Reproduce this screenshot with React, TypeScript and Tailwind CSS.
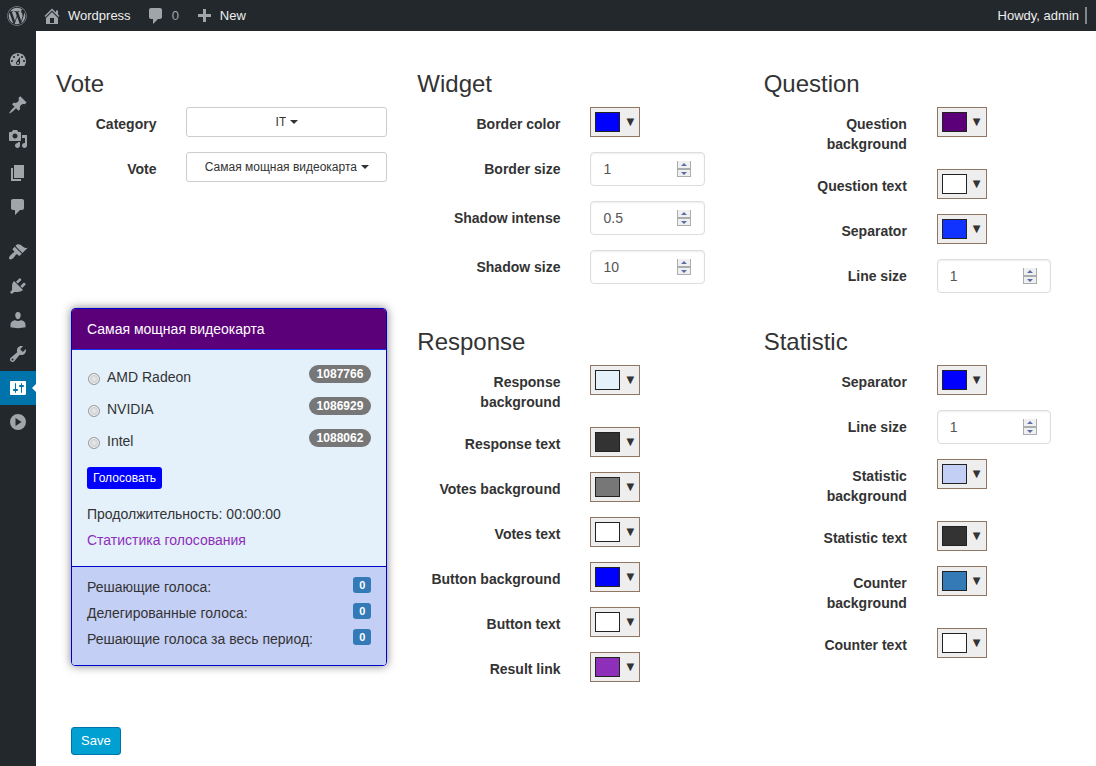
import clsx from 'clsx'
import React from 'react'
import { FaWordpress } from 'react-icons/fa'

const icons = {
  home: 'M16 8.5l1.53 1.53-1.06 1.06L10 4.6l-6.47 6.49-1.06-1.06L10 2.5l4 4v-2h2v4zm-6-2.46l6 5.99V18H4v-5.97zM12 17v-5H8v5h4z',
  comments:
    'M5 2h9c1.1 0 2 .9 2 2v7c0 1.1-.9 2-2 2h-2l-5 5v-5H5c-1.1 0-2-.9-2-2V4c0-1.1.9-2 2-2z',
  plus: 'M17 8v3h-5v5H9v-5H4V8h5V3h3v5h5z',
  dashboard:
    'M3.76 16h12.48c1.1-1.37 1.76-3.11 1.76-5 0-4.42-3.58-8-8-8s-8 3.58-8 8c0 1.89.66 3.63 1.76 5zM10 4c.55 0 1 .45 1 1s-.45 1-1 1-1-.45-1-1 .45-1 1-1zM6 6c.55 0 1 .45 1 1s-.45 1-1 1-1-.45-1-1 .45-1 1-1zm8 0c.55 0 1 .45 1 1s-.45 1-1 1-1-.45-1-1 .45-1 1-1zm-5.37 5.55L12 7v6c0 1.1-.9 2-2 2s-2-.9-2-2c0-.57.24-1.08.63-1.45zM4 10c.55 0 1 .45 1 1s-.45 1-1 1-1-.45-1-1 .45-1 1-1zm12 0c.55 0 1 .45 1 1s-.45 1-1 1-1-.45-1-1 .45-1 1-1zm-5 3c0-.55-.45-1-1-1s-1 .45-1 1 .45 1 1 1 1-.45 1-1z',
  posts:
    'M10.44 3.02l1.82-1.82 6.36 6.35-1.83 1.82c-1.05-.68-2.48-.57-3.41.36l-.75.75c-.92.93-1.04 2.35-.35 3.41l-1.83 1.82-2.41-2.41-2.8 2.79c-.42.42-3.38 2.71-3.8 2.29s1.86-3.39 2.28-3.81l2.79-2.79L4.1 9.36l1.83-1.82c1.05.69 2.48.57 3.4-.36l.75-.75c.93-.92 1.05-2.35.36-3.41z',
  media:
    'M13 11V4c0-.55-.45-1-1-1h-1.67L9 1H5L3.67 3H2c-.55 0-1 .45-1 1v7c0 .55.45 1 1 1h10c.55 0 1-.45 1-1zM7 4.5c1.38 0 2.5 1.12 2.5 2.5S8.38 9.5 7 9.5 4.5 8.38 4.5 7 5.62 4.5 7 4.5zM14 6h5v10.5c0 1.38-1.12 2.5-2.5 2.5S14 17.88 14 16.5s1.12-2.5 2.5-2.5c.17 0 .34.02.5.05V9h-3V6zm-4 8.05V13h2v3.5c0 1.38-1.12 2.5-2.5 2.5S7 17.88 7 16.5 8.12 14 9.5 14c.17 0 .34.02.5.05z',
  pages: 'M6 15V2h10v13H6zm-1 1h8v2H3V5h2v11z',
  appearance:
    'M14.48 11.06L7.41 3.99l1.5-1.5c.5-.56 2.3-.47 3.51.32 1.21.8 1.43 1.28 2.91 2.1 1.18.64 2.45 1.26 4.45.85zm-.71.71L6.7 4.7 4.93 6.47c-.39.39-.39 1.02 0 1.41l1.06 1.06c.39.39.39 1.03 0 1.42-.6.6-1.43 1.11-2.21 1.69-.35.26-.7.53-1.01.84C1.43 14.23.4 16.08 1.4 17.07c.99 1 2.84-.03 4.18-1.36.31-.31.58-.66.85-1.02.57-.78 1.08-1.61 1.69-2.21.39-.39 1.02-.39 1.41 0l1.06 1.06c.39.39 1.02.39 1.41 0z',
  plugins:
    'M13.11 4.36L9.87 7.6 8 5.73l3.24-3.24c.35-.34 1.05-.2 1.56.32.52.51.66 1.21.31 1.55zm-8 1.77l.91-1.12 9.01 9.01-1.19.84c-.71.71-2.63 1.16-3.82 1.16H6.14L4.9 17.26c-.59.59-1.54.59-2.12 0-.59-.58-.59-1.53 0-2.12l1.24-1.24v-3.88c0-1.13.4-3.19 1.09-3.89zm7.26 3.97l3.24-3.24c.34-.35 1.04-.21 1.55.31.52.51.66 1.21.31 1.55l-3.24 3.25z',
  users:
    'M10 9.25c-2.27 0-2.73-3.44-2.73-3.44C7 4.02 7.82 2 9.97 2c2.16 0 2.98 2.02 2.71 3.81 0 0-.41 3.44-2.68 3.44zM7.2 10.2c1.6 1.1 4 1.1 5.6 0 2.5.1 4.7 2 4.7 4.5v2.6c-3.8 1.1-11.2 1.1-15 0v-2.6c0-2.5 2.2-4.4 4.7-4.5z',
  tools:
    'M16.68 9.77c-1.34 1.34-3.3 1.67-4.95.99l-5.41 6.52c-.99.99-2.59.99-3.58 0s-.99-2.59 0-3.57l6.52-5.42c-.68-1.65-.35-3.61.99-4.95 1.28-1.28 3.12-1.62 4.72-1.06l-2.89 2.89 2.82 2.82 2.86-2.87c.53 1.58.18 3.39-1.08 4.65zM3.81 16.21c.4.39 1.04.39 1.43 0 .4-.4.4-1.04 0-1.43-.39-.4-1.03-.4-1.43 0-.39.39-.39 1.03 0 1.43z',
  settings:
    'M18 16V4c0-.55-.45-1-1-1H3c-.55 0-1 .45-1 1v12c0 .55.45 1 1 1h13c.55 0 2-.45 2-1zM8 11h1c.55 0 1 .45 1 1s-.45 1-1 1H8v1.5c0 .28-.22.5-.5.5s-.5-.22-.5-.5V13H6c-.55 0-1-.45-1-1s.45-1 1-1h1V5.5c0-.28.22-.5.5-.5s.5.22.5.5V11zm5-2h-1c-.55 0-1-.45-1-1s.45-1 1-1h1V5.5c0-.28.22-.5.5-.5s.5.22.5.5V7h1c.55 0 1 .45 1 1s-.45 1-1 1h-1v5.5c0 .28-.22.5-.5.5s-.5-.22-.5-.5V9z',
  collapse: 'M10 2a8 8 0 1 1 0 16a8 8 0 1 1 0-16zM7.5 6v8l6-4z',
}

type IconName = keyof typeof icons

const menu: IconName[][] = [
  ['dashboard'],
  ['posts', 'media', 'pages', 'comments'],
  ['appearance', 'plugins', 'users', 'tools', 'settings', 'collapse'],
]

interface Field {
  label: string
  color?: string
  value?: string
}

const widget: Field[] = [
  { label: 'Border color', color: '#0000ff' },
  { label: 'Border size', value: '1' },
  { label: 'Shadow intense', value: '0.5' },
  { label: 'Shadow size', value: '10' },
]

const question: Field[] = [
  { label: 'Question background', color: '#5b0078' },
  { label: 'Question text', color: '#ffffff' },
  { label: 'Separator', color: '#1133ff' },
  { label: 'Line size', value: '1' },
]

const response: Field[] = [
  { label: 'Response background', color: '#e4f1fb' },
  { label: 'Response text', color: '#333333' },
  { label: 'Votes background', color: '#777777' },
  { label: 'Votes text', color: '#ffffff' },
  { label: 'Button background', color: '#0000ff' },
  { label: 'Button text', color: '#ffffff' },
  { label: 'Result link', color: '#8d2fb8' },
]

const statistic: Field[] = [
  { label: 'Separator', color: '#0000ff' },
  { label: 'Line size', value: '1' },
  { label: 'Statistic background', color: '#c4cff5' },
  { label: 'Statistic text', color: '#333333' },
  { label: 'Counter background', color: '#337ab7' },
  { label: 'Counter text', color: '#ffffff' },
]

const answers = [
  { name: 'AMD Radeon', votes: '1087766' },
  { name: 'NVIDIA', votes: '1086929' },
  { name: 'Intel', votes: '1088062' },
]

const totals = [
  'Решающие голоса:',
  'Делегированные голоса:',
  'Решающие голоса за весь период:',
]

const Icon = ({ name }: { name: IconName }) => (
  <svg
    viewBox="0 0 20 20"
    className="size-5 shrink-0 fill-current"
    aria-hidden="true"
  >
    <path fillRule="evenodd" d={icons[name]} />
  </svg>
)

const ColorPicker = ({ id, color }: { id: string; color: string }) => (
  <button
    id={id}
    type="button"
    className="flex h-[30px] w-[50px] items-center gap-1.5 border border-[#917661] bg-[#eeeeee] pl-1"
  >
    <span
      className="h-5 w-[25px] border border-[#222222]"
      style={{ backgroundColor: color }}
    />
    <span className="font-['DejaVu_Sans',sans-serif] text-[10px] leading-4 text-[#333333]">
      ▼
    </span>
  </button>
)

const NumberInput = ({ id, value }: { id: string; value: string }) => (
  <div className="relative">
    <input
      id={id}
      type="number"
      step="any"
      defaultValue={value}
      className="block h-[34px] w-full [appearance:textfield] rounded border border-[#dddddd] bg-white pr-8 pl-3 text-sm text-[#555555] shadow-[inset_0_1px_2px_rgba(0,0,0,0.07)] [&::-webkit-inner-spin-button]:appearance-none"
    />
    <svg
      viewBox="0 0 14 16"
      className="pointer-events-none absolute top-[9px] right-3.5 h-4 w-3.5"
      aria-hidden="true"
    >
      <path fill="#f0f0f0" d="M0 0h14v16H0z" />
      <path fill="#a9adb0" d="M0 0h1v16H0zM13 0h1v16h-1zM0 7h14v2H0zM0 15h14v1H0z" />
      <path fill="#5a6fa8" d="M7 2l3 3H4zM7 14l-3-3h6z" />
    </svg>
  </div>
)

const Select = ({ id, value }: { id: string; value: string }) => (
  <div className="flex h-[30px] items-center justify-center gap-1 rounded-[3px] border border-[#cccccc]">
    <select
      id={id}
      className="[field-sizing:content] appearance-none bg-transparent text-xs text-[#333333] outline-none"
    >
      <option>{value}</option>
    </select>
    <svg viewBox="0 0 8 4" className="h-1 w-2 fill-[#333333]" aria-hidden="true">
      <path d="M0 0h8L4 4z" />
    </svg>
  </div>
)

const Fields = ({ title, fields }: { title: string; fields: Field[] }) => (
  <section>
    <h3 className="mt-5 mb-2.5 pl-[15px] text-2xl leading-[27px]">{title}</h3>
    {fields.map(({ label, color, value }) => {
      const id = `${title}-${label}`.toLowerCase().replace(/ /g, '-')
      return (
        <div key={label} className="mb-[15px] grid grid-cols-12">
          <label
            htmlFor={id}
            className="col-span-6 pt-[7px] pr-[15px] pl-6 text-right font-bold"
          >
            {label}
          </label>
          <div className="col-span-5 px-[15px]">
            {color ? (
              <ColorPicker id={id} color={color} />
            ) : (
              <NumberInput id={id} value={value} />
            )}
          </div>
        </div>
      )
    })}
  </section>
)

const VotePreview = () => (
  <div className="mx-[15px] self-start overflow-hidden rounded border border-[#0000cc] shadow-[0_0_10px_rgba(0,0,0,0.5)]">
    <div className="border-b border-[#1133ff] bg-[#5b0078] px-[15px] py-2.5 text-white">
      Самая мощная видеокарта
    </div>
    <div className="border-b border-[#0000cc] bg-[#e4f1fb] px-[15px] pt-[15px] pb-4">
      {answers.map(({ name, votes }) => (
        <div key={name} className="mb-2.5 flex items-start justify-between">
          <label className="flex items-center gap-[7px] pt-0.5">
            <input
              type="radio"
              name="answer"
              className="mt-1 ml-px size-3 appearance-none rounded-full border border-[#949a9e] bg-radial from-[#eeeeee] to-[#c4c7c9] to-70% shadow-[inset_0_0_0_1px_#f8f8f8] checked:from-[#333333]"
            />
            {name}
          </label>
          <span className="rounded-[10px] bg-[#777777] px-2 text-xs leading-[18px] font-bold text-white">
            {votes}
          </span>
        </div>
      ))}
      <button
        type="button"
        className="mt-4 mb-[15px] block h-[22px] rounded-[3px] bg-[#0000ff] px-1.5 text-xs text-white"
      >
        Голосовать
      </button>
      <p className="mb-1.5">Продолжительность: 00:00:00</p>
      <a href="#" className="block text-[#8d2fb8]">
        Статистика голосования
      </a>
    </div>
    <div className="bg-[#c4cff5] px-[15px] py-2.5">
      {totals.map((text) => (
        <div key={text} className="mb-1.5 flex items-start justify-between">
          <span>{text}</span>
          <span className="rounded-[3px] bg-[#337ab7] px-1.5 text-[11px] leading-4 font-bold text-white">
            0
          </span>
        </div>
      ))}
    </div>
  </div>
)

const App = () => {
  return (
    <div className="flex min-h-screen flex-col bg-white font-['Liberation_Sans',Arial,sans-serif] text-sm leading-5 text-[#333333]">
      <header className="flex h-[31px] items-center bg-[#23282d] pr-[9px] pl-[7px] text-[13px] text-[#eeeeee]">
        <a href="#" aria-label="WordPress" className="text-[#a0a5aa]">
          <FaWordpress className="size-5" />
        </a>
        <a href="#" className="ml-[15px] flex items-center gap-1.5">
          <span className="text-[#a0a5aa]">
            <Icon name="home" />
          </span>
          Wordpress
        </a>
        <a
          href="#"
          className="ml-[15px] flex items-center gap-1.5 text-[#a0a5aa]"
        >
          <Icon name="comments" />0
        </a>
        <a href="#" className="ml-[15px] flex items-center gap-1.5">
          <span className="text-[#a0a5aa]">
            <Icon name="plus" />
          </span>
          New
        </a>
        <a href="#" className="ml-auto flex items-center gap-1.5">
          Howdy, admin
          <span className="h-[17px] w-0.5 bg-[#82878c]" />
        </a>
      </header>

      <div className="flex grow">
        <nav className="flex w-9 shrink-0 flex-col gap-[11px] bg-[#23282d] pt-3 text-[#a0a5aa]">
          {menu.map((group, index) => (
            <div key={index}>
              {group.map((name) => (
                <a
                  key={name}
                  href="#"
                  aria-label={name}
                  className={clsx(
                    'relative flex h-[34px] items-center justify-center',
                    name === 'settings' && 'bg-[#0073aa] text-white'
                  )}
                >
                  <Icon name={name} />
                  {name === 'settings' && (
                    <span className="absolute right-0 border-y-4 border-r-4 border-y-transparent border-r-white" />
                  )}
                </a>
              ))}
            </div>
          ))}
        </nav>

        <form className="grow pt-[19px] pr-px pl-5">
          <div className="grid grid-cols-3">
            <section>
              <h3 className="mt-5 mb-2.5 text-2xl leading-[27px]">Vote</h3>
              <div className="mb-[15px] grid grid-cols-3">
                <label
                  htmlFor="category"
                  className="px-[15px] pt-[7px] text-right font-bold"
                >
                  Category
                </label>
                <div className="col-span-2 px-[15px]">
                  <Select id="category" value="IT" />
                </div>
              </div>
              <div className="mb-[15px] grid grid-cols-3">
                <label
                  htmlFor="vote"
                  className="px-[15px] pt-[7px] text-right font-bold"
                >
                  Vote
                </label>
                <div className="col-span-2 px-[15px]">
                  <Select id="vote" value="Самая мощная видеокарта" />
                </div>
              </div>
            </section>
            <Fields title="Widget" fields={widget} />
            <Fields title="Question" fields={question} />
            <VotePreview />
            <Fields title="Response" fields={response} />
            <Fields title="Statistic" fields={statistic} />
          </div>
          <button
            type="submit"
            className="mt-[30px] ml-[15px] block h-7 rounded-[3px] border border-[#0073aa] bg-[#00a0d2] px-[9px] text-[13px] text-white"
          >
            Save
          </button>
        </form>
      </div>
    </div>
  )
}
export default App
